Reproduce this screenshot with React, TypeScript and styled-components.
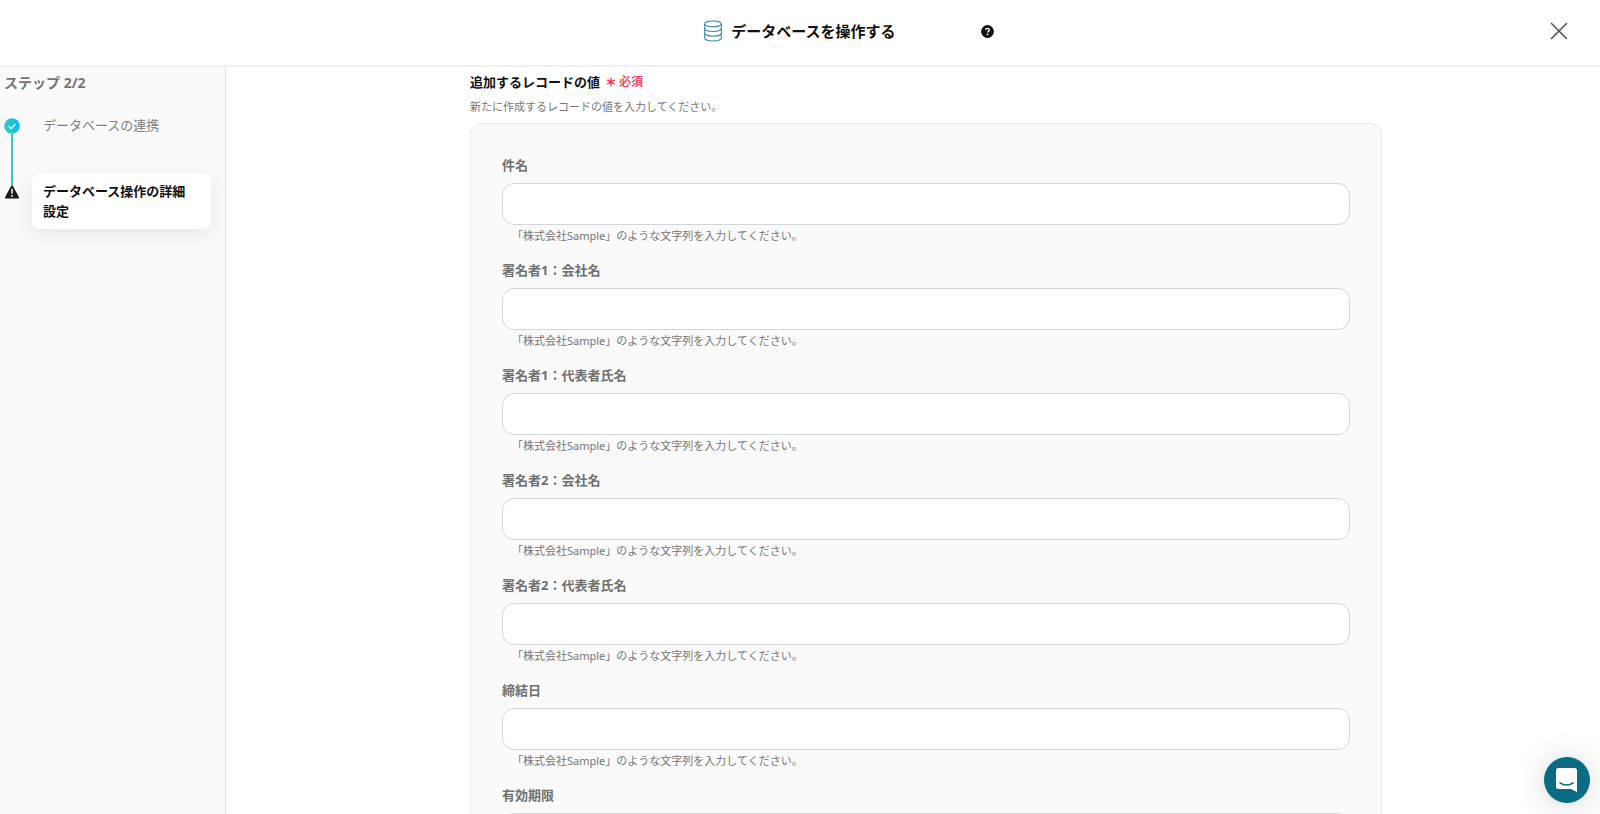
import React from "react";
import styled, { createGlobalStyle } from "styled-components";

const GlobalStyle = createGlobalStyle`
  *, *::before, *::after { box-sizing: border-box; }
  body {
    margin: 0;
    background: #fff;
    color: #111;
    font-family: "Noto Sans", "Noto Sans CJK JP", sans-serif;
    font-size: 13px;
    line-height: 20px;
  }
  h1, h2, p, ol { margin: 0; padding: 0; }
  button { border: 0; padding: 0; background: none; font: inherit; cursor: pointer; }
`;

const Page = styled.div`
  display: flex;
  flex-direction: column;
  height: 100vh;
  overflow: hidden;
`;

const Header = styled.header`
  display: grid;
  grid-template-columns: 1fr auto 1fr;
  align-items: center;
  flex: none;
  padding: 18px 32px 21px;
  border-bottom: 2px solid #f2f2f2;
`;

const TitleGroup = styled.div`
  grid-column: 2;
  display: flex;
  align-items: center;
  gap: 9px;
`;

const Title = styled.h1`
  font-size: 15px;
  line-height: 26px;
  font-weight: 700;
`;

const HeaderActions = styled.div`
  display: flex;
  align-items: center;
  justify-content: space-between;
  padding-left: 85px;
`;

const IconButton = styled.button`
  display: flex;
`;

const Body = styled.div`
  display: flex;
  flex: 1;
  min-height: 0;
`;

const Sidebar = styled.aside`
  flex: none;
  width: 226px;
  padding: 6px 14px 0 4px;
  background: #fafafa;
  border-right: 1px solid #e4e4e4;
`;

const StepCount = styled.p`
  font-size: 14px;
  font-weight: 700;
  color: #757575;
`;

const StepList = styled.ol`
  list-style: none;
  margin-top: 16px;
`;

const Step = styled.li`
  display: flex;
  gap: 12px;
`;

const StepTrack = styled.div<{ $active?: boolean }>`
  display: flex;
  flex-direction: column;
  align-items: center;
  flex: none;
  width: 16px;
  padding-top: ${(p) => (p.$active ? "11px" : "9px")};
`;

const StepLine = styled.span`
  flex: 1;
  width: 2px;
  margin-bottom: -12px;
  background: #35c9c3;
`;

const StepCard = styled.div<{ $active?: boolean }>`
  flex: 1;
  margin-bottom: ${(p) => (p.$active ? "0" : "30px")};
  padding: ${(p) => (p.$active ? "8px 20px 8px 11px" : "6px 20px 8px 11px")};
  border-radius: 8px;
  background: ${(p) => (p.$active ? "#fff" : "transparent")};
  box-shadow: ${(p) => (p.$active ? "0 6px 20px rgba(0, 0, 0, 0.08)" : "none")};
  color: ${(p) => (p.$active ? "#111" : "#808080")};
  font-weight: ${(p) => (p.$active ? 700 : 400)};
`;

const Content = styled.main`
  flex: 1;
  min-width: 0;
  overflow-y: auto;
  scrollbar-width: none;
  padding: 5px 218px 40px 244px;
`;

const SectionHeading = styled.div`
  display: flex;
  align-items: center;
  gap: 6px;
`;

const SectionTitle = styled.h2`
  font-size: 13px;
  font-weight: 700;
`;

const Required = styled.span`
  display: flex;
  align-items: center;
  gap: 3px;
  font-size: 12px;
  font-weight: 500;
  color: #ff2b4a;
`;

const HelpText = styled.p`
  font-size: 11px;
  line-height: 16px;
  color: #777;
`;

const SectionHelp = styled(HelpText)`
  margin: 7px 0 8px;
`;

const Panel = styled.section`
  display: flex;
  flex-direction: column;
  gap: 16px;
  padding: 31px;
  border: 1px solid #e8e8ea;
  border-radius: 12px;
  background: #fafafa;
`;

const FieldLabel = styled.label`
  display: block;
  margin-bottom: 8px;
  font-size: 13px;
  font-weight: 700;
  color: #707070;
`;

const TextInput = styled.input`
  display: block;
  width: 100%;
  height: 42px;
  padding: 0 12px;
  border: 1px solid #d3d6dc;
  border-radius: 12px;
  background: #fff;
  font: inherit;
`;

const FieldHelp = styled(HelpText)`
  margin-top: 3px;
  padding-left: 10px;
`;

const ChatButton = styled.button`
  position: fixed;
  right: 10px;
  bottom: 11px;
  display: flex;
  align-items: center;
  justify-content: center;
  width: 46px;
  height: 46px;
  border-radius: 50%;
  background: #0a6c83;
  box-shadow: 0 1px 6px rgba(0, 0, 0, 0.06), 0 2px 32px rgba(0, 0, 0, 0.16);
`;

const DatabaseIcon = () => (
  <svg width="18" height="22" viewBox="0 0 18 22" fill="none" stroke="#3b8a9f" strokeWidth="1.1" aria-hidden="true">
    <ellipse cx="9" cy="3.9" rx="8.3" ry="2.9" />
    <path d="M.7 3.9v14.2c0 1.6 3.7 2.9 8.3 2.9s8.3-1.3 8.3-2.9V3.9" />
    <path d="M.7 8.6c0 1.6 3.7 2.9 8.3 2.9s8.3-1.3 8.3-2.9M.7 13.3c0 1.6 3.7 2.9 8.3 2.9s8.3-1.3 8.3-2.9" />
  </svg>
);

const HelpIcon = () => (
  <svg width="13" height="13" viewBox="0 0 13 13" aria-hidden="true">
    <circle cx="6.5" cy="6.5" r="6.4" fill="#111" />
    <path d="M4.7 5.1c0-1.1.8-1.7 1.9-1.7s1.8.6 1.8 1.5c0 1.2-1.8 1.2-1.8 2.5" fill="none" stroke="#fff" strokeWidth="1.3" />
    <circle cx="6.6" cy="9.4" r=".9" fill="#fff" />
  </svg>
);

const CloseIcon = () => (
  <svg width="18" height="18" viewBox="0 0 18 18" stroke="#555" strokeWidth="1.6" strokeLinecap="round" aria-hidden="true">
    <path d="M1.5 1.5l15 15M16.5 1.5l-15 15" />
  </svg>
);

const DoneIcon = () => (
  <svg width="16" height="16" viewBox="0 0 16 16" aria-hidden="true">
    <defs>
      <linearGradient id="done" x1="0" y1="0.6" x2="1" y2="0.4">
        <stop offset="0" stopColor="#2bcfc4" />
        <stop offset="1" stopColor="#12b8ee" />
      </linearGradient>
    </defs>
    <circle cx="8" cy="8" r="7.8" fill="url(#done)" />
    <path d="M4.6 8.2l2.5 2.4 4.4-4.6" fill="none" stroke="#fff" strokeWidth="1.3" />
  </svg>
);

const WarningIcon = () => (
  <svg width="16" height="16" viewBox="0 0 16 16" aria-hidden="true">
    <path d="M8 2.2L14.2 13.6H1.8z" fill="#1a1a1a" stroke="#1a1a1a" strokeWidth="1.8" strokeLinejoin="round" />
    <path d="M8 4.8v5" stroke="#fff" strokeWidth="1.5" />
    <circle cx="8" cy="12" r=".9" fill="#fff" />
  </svg>
);

const AsteriskIcon = () => (
  <svg width="10" height="10" viewBox="0 0 10 10" stroke="#ff2b4a" strokeWidth="1.3" aria-hidden="true">
    <path d="M5 .8v8.4M1.2 2.9l7.6 4.2M8.8 2.9L1.2 7.1" />
  </svg>
);

const ChatIcon = () => (
  <svg width="22" height="24" viewBox="0 0 22 24" aria-hidden="true">
    <path d="M2.5 0h16A2.5 2.5 0 0 1 21 2.5V24l-6-3H2.5A2.5 2.5 0 0 1 0 18.5V2.5A2.5 2.5 0 0 1 2.5 0z" fill="#fff" />
    <path d="M4 14.8c3.8 3 9.2 3 13 0" fill="none" stroke="#0a6c83" strokeWidth="1.5" strokeLinecap="round" />
  </svg>
);

const textHint = "「株式会社Sample」のような文字列を入力してください。";

const fields: { name: string; hint?: string }[] = [
  { name: "件名", hint: textHint },
  { name: "署名者1：会社名", hint: textHint },
  { name: "署名者1：代表者氏名", hint: textHint },
  { name: "署名者2：会社名", hint: textHint },
  { name: "署名者2：代表者氏名", hint: textHint },
  { name: "締結日", hint: textHint },
  { name: "有効期限" },
];

export default function App() {
  return (
    <Page lang="ja">
      <GlobalStyle />
      <Header>
        <TitleGroup>
          <DatabaseIcon />
          <Title>データベースを操作する</Title>
        </TitleGroup>
        <HeaderActions>
          <IconButton type="button" aria-label="ヘルプ">
            <HelpIcon />
          </IconButton>
          <IconButton type="button" aria-label="閉じる">
            <CloseIcon />
          </IconButton>
        </HeaderActions>
      </Header>
      <Body>
        <Sidebar>
          <StepCount>ステップ 2/2</StepCount>
          <StepList>
            <Step>
              <StepTrack>
                <DoneIcon />
                <StepLine />
              </StepTrack>
              <StepCard>データベースの連携</StepCard>
            </Step>
            <Step aria-current="step">
              <StepTrack $active>
                <WarningIcon />
              </StepTrack>
              <StepCard $active>データベース操作の詳細設定</StepCard>
            </Step>
          </StepList>
        </Sidebar>
        <Content>
          <SectionHeading>
            <SectionTitle>追加するレコードの値</SectionTitle>
            <Required>
              <AsteriskIcon />
              必須
            </Required>
          </SectionHeading>
          <SectionHelp>新たに作成するレコードの値を入力してください。</SectionHelp>
          <Panel>
            {fields.map(({ name, hint }, i) => (
              <div key={name}>
                <FieldLabel htmlFor={`field-${i}`}>{name}</FieldLabel>
                <TextInput id={`field-${i}`} type="text" aria-describedby={hint && `hint-${i}`} />
                {hint && <FieldHelp id={`hint-${i}`}>{hint}</FieldHelp>}
              </div>
            ))}
          </Panel>
        </Content>
      </Body>
      <ChatButton type="button" aria-label="チャットを開く">
        <ChatIcon />
      </ChatButton>
    </Page>
  );
}
